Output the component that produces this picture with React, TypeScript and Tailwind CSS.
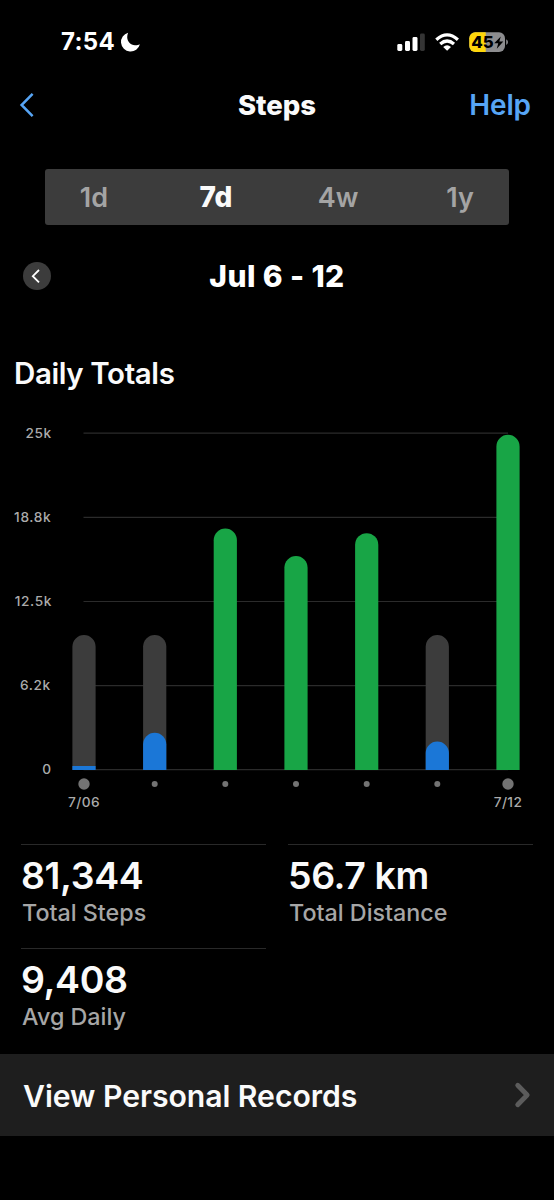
const GRID = [
  { y: 433.2, label: "25k", x: 51.8 },
  { y: 517.4, label: "18.8k", x: 51.2 },
  { y: 601.5, label: "12.5k", x: 52 },
  { y: 685.6, label: "6.2k", x: 50.8 },
  { y: 769.6, label: "0", x: 51.6 },
];

const BASE = 770;
const GOAL_TOP = 635;

const DAYS = [
  { x: 84, top: 766, met: false, label: "7/06" },
  { x: 154.7, top: 732.8, met: false },
  { x: 225.3, top: 528.6, met: true },
  { x: 296, top: 556, met: true },
  { x: 366.7, top: 533.2, met: true },
  { x: 437.3, top: 741.5, met: false },
  { x: 508, top: 434.8, met: true, label: "7/12" },
];

function bar(cx: number, top: number) {
  const r = 11.6;
  const height = BASE - top;
  if (height < r) {
    return `M${cx - r} ${BASE}V${top}H${cx + r}V${BASE}Z`;
  }
  return `M${cx - r} ${BASE}V${top + r}A${r} ${r} 0 0 1 ${cx + r} ${top + r}V${BASE}Z`;
}

function StatusBar() {
  return (
    <div className="flex h-[83px] items-center pl-[61px] pr-[45px]">
      <span className="w-[58px] whitespace-nowrap text-[24px] font-bold leading-none tracking-[0.35px]">7:54</span>
      <svg className="h-[22px] w-[22px]" viewBox="0 0 22 22" fill="#fff">
        <path d="M9.1 1.7A9.6 9.6 0 1 0 20.9 13.3C19 14.3 17.5 14.4 16 14.3C11.4 13.8 8.3 10.4 8.2 6.2C8.2 4.6 8.5 3.2 9.1 1.7Z" />
      </svg>
      <svg className="ml-auto h-[22px] w-[112px]" viewBox="397 30 112 22">
        <g fill="#fff">
          <rect x="397.3" y="43" width="5" height="7" rx="1.4" />
          <rect x="405" y="40" width="5" height="10" rx="1.4" />
          <rect x="412.5" y="36" width="5" height="14" rx="1.4" />
          <rect x="420" y="32.5" width="4.8" height="17.5" rx="1.4" fill="#343434" />
        </g>
        <g fill="none" stroke="#fff" strokeWidth="3.2">
          <path d="M436.3 38.7Q447.1 29 457.9 38.7" />
          <path d="M440.2 43Q447.1 37 454 43" />
        </g>
        <path d="M443.2 45.9Q447.1 42.8 451 45.9L447.1 49.7Z" fill="#fff" />
        <clipPath id="battery">
          <rect x="469.3" y="31.2" width="35.7" height="19.8" rx="6" />
        </clipPath>
        <g clipPath="url(#battery)">
          <rect x="469" y="31" width="37" height="21" fill="#8d8d8f" />
          <rect x="469" y="31" width="16.7" height="21" fill="#ffd60a" />
        </g>
        <path d="M506.2 38.2Q508 39 508 41.1T506.2 44Z" fill="#8d8d8f" />
        <text x="471.3" y="47.2" fontSize="16.5" fontWeight="800" textLength="22.5" lengthAdjust="spacingAndGlyphs" fill="#000">45</text>
        <path d="M500.8 35.5L494.2 42.2H498.2L496.8 47.7L503.3 40.6H499.3Z" fill="#000" />
      </svg>
    </div>
  );
}

function Header() {
  return (
    <header className="grid h-[44px] grid-cols-3 items-center px-[19px] leading-none">
      <svg className="h-[26px] w-[16px]" viewBox="0 0 16 26" fill="none" stroke="#57a5f5" strokeWidth="2.5">
        <path d="M13.6 1.8L2.6 13L13.6 24.2" />
      </svg>
      <h1 className="pt-[2px] text-center text-[27.5px] font-extrabold text-[#fafafa]">Steps</h1>
      <button className="pr-[4px] text-right text-[28px] font-semibold tracking-[-0.1px] text-[#57a5f5]">Help</button>
    </header>
  );
}

function Tabs() {
  return (
    <nav className="mx-[45px] mt-[42px] grid h-[56px] grid-cols-[repeat(4,122px)] items-center justify-center rounded-[3px] bg-[#3c3c3c] text-center text-[27px] font-semibold leading-none text-[#a4a4a4]">
      <span>1d</span>
      <span className="text-[28px] font-extrabold text-[#fafafa]">7d</span>
      <span>4w</span>
      <span>1y</span>
    </nav>
  );
}

function Chart() {
  return (
    <svg className="block h-[404px] w-full" viewBox="0 416 554 404">
      {GRID.map((line) => (
        <g key={line.label}>
          <path d={`M83.5 ${line.y}H508`} stroke="#2b2b2b" strokeWidth="1.2" />
          <text x={line.x} y={line.y + 4.8} textAnchor="end" fontSize="13.7" fontWeight="500" letterSpacing="0.6" fill="#ababab">
            {line.label}
          </text>
        </g>
      ))}
      {DAYS.map((day) => (
        <g key={day.x}>
          {!day.met && <path d={bar(day.x, GOAL_TOP)} fill="#3c3c3c" />}
          <path d={bar(day.x, day.top)} fill={day.met ? "#18a546" : "#1b77d7"} />
          <circle cx={day.x} cy="784" r={day.label ? 5.7 : 3} fill="#737373" />
          {day.label && (
            <text x={day.x} y="807" textAnchor="middle" fontSize="13.7" fontWeight="500" letterSpacing="0.4" fill="#ababab">
              {day.label}
            </text>
          )}
        </g>
      ))}
    </svg>
  );
}

function Stat({ value, label }: { value: string; label: string }) {
  return (
    <div className="h-[103.5px] border-t-[1.5px] border-[#292929] pt-[10px]">
      <div className="h-[42px] whitespace-nowrap text-[37.5px] font-semibold leading-[42px] tracking-[-0.4px] text-[#fafafa]">{value}</div>
      <div className="h-[32px] whitespace-nowrap pl-[1px] text-[23.3px] font-medium leading-[32px] text-[#a6a6a6]">{label}</div>
    </div>
  );
}

export default function App() {
  return (
    <main className="h-[1200px] w-[554px] overflow-hidden bg-black font-['Inter',sans-serif] text-white">
      <StatusBar />
      <Header />
      <Tabs />
      <div className="mt-[29px] grid h-[44px] grid-cols-[28px_1fr_28px] items-center px-[23px]">
        <button className="flex size-[28px] items-center justify-center rounded-full bg-[#3c3c3c]">
          <svg className="size-[28px]" viewBox="0 0 28 28" fill="none" stroke="#fff" strokeWidth="1.8">
            <path d="M16 8L9.8 14.2L16 20.4" />
          </svg>
        </button>
        <h2 className="text-center text-[30px] font-extrabold leading-[44px] tracking-[0.4px]">Jul 6 - 12</h2>
      </div>
      <h3 className="mt-[53px] h-[44px] pl-[14px] text-[29.5px] font-semibold leading-[44px] tracking-[-0.4px] text-[#fafafa]">Daily Totals</h3>
      <div className="pt-[21px]">
        <Chart />
      </div>
      <section className="mt-[24px] grid grid-cols-[245px_245px] gap-x-[22px] pl-[21px]">
        <Stat value="81,344" label="Total Steps" />
        <Stat value="56.7 km" label="Total Distance" />
        <Stat value="9,408" label="Avg Daily" />
      </section>
      <button className="mt-[3px] flex h-[82px] w-full items-center justify-between bg-[#1e1e1e] pl-[23px] pr-[21px]">
        <span className="pt-[2px] text-[30.2px] font-semibold leading-none tracking-[-0.05px] text-[#fafafa]">View Personal Records</span>
        <svg className="h-[28px] w-[20px]" viewBox="0 0 20 28" fill="none" stroke="#5c5c5c" strokeWidth="4.8" strokeLinecap="round" strokeLinejoin="round">
          <path d="M4.7 4.3L14.2 14L4.7 23.7" />
        </svg>
      </button>
    </main>
  );
}
